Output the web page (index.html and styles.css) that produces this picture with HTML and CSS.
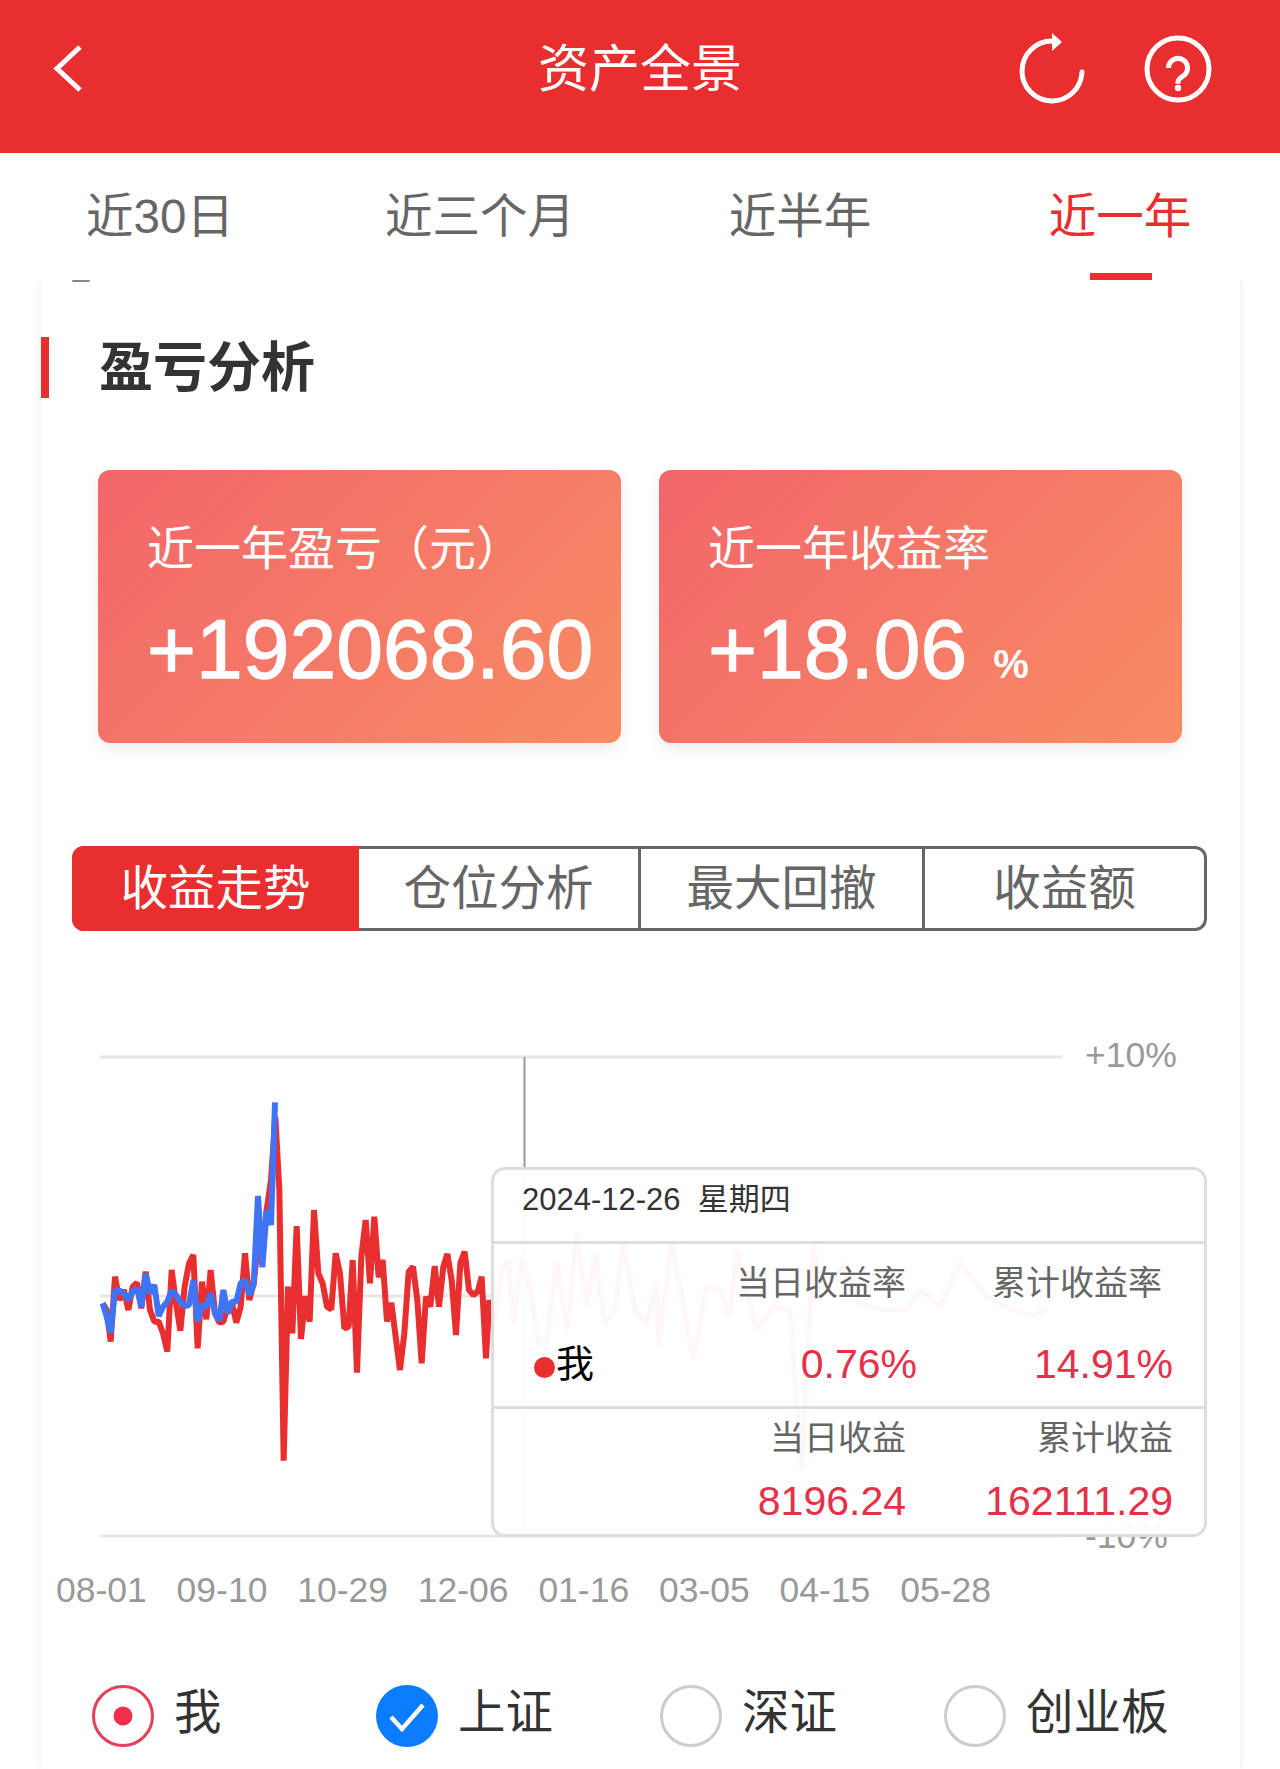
FILE: index.html
```html
<!DOCTYPE html>
<html lang="zh-CN">
<head>
<meta charset="utf-8">
<title>资产全景</title>
<link rel="stylesheet" href="styles.css">
</head>
<body>
<header class="topbar">
  <svg class="back" viewBox="50 40 40 57"><polyline points="80,47 57,68.5 80,90"/></svg>
  <h1 class="page-title">资产全景</h1>
  <div class="actions">
    <svg class="icon-refresh" viewBox="1018 28 70 80"><path d="M1082 72A30 30 0 1 1 1052 41"/><polygon points="1052,33 1062,42 1052,51"/></svg>
    <svg class="icon-help" viewBox="1140 30 76 76"><circle cx="1178" cy="69" r="31"/><path d="M1168.500 68a9.500 9.500 0 1 1 15 7.700c-3.500 2.500-5.500 3.500-5.500 6.500v1.500"/><circle class="dot" cx="1178" cy="88" r="3.200"/></svg>
  </div>
</header>
<nav class="tabs">
  <a class="tab">近30日</a>
  <a class="tab">近三个月</a>
  <a class="tab">近半年</a>
  <a class="tab active">近一年</a>
</nav>
<main class="panel">
  <div class="sliver"></div>
  <h2 class="section-title">盈亏分析</h2>
  <section class="stats">
    <div class="stat">
      <div class="stat-label">近一年盈亏（元）</div>
      <div class="stat-value">+192068.60</div>
    </div>
    <div class="stat">
      <div class="stat-label">近一年收益率</div>
      <div class="stat-value">+18.06<span class="unit">%</span></div>
    </div>
  </section>
  <div class="segments">
    <div class="segment on">收益走势</div>
    <div class="segment first">仓位分析</div>
    <div class="segment">最大回撤</div>
    <div class="segment">收益额</div>
  </div>
  <section class="chart">
    <svg class="plot" viewBox="41 1040 1199 520">
      <line class="grid" x1="100" y1="1057" x2="1062" y2="1057"/>
      <line class="grid" x1="100" y1="1296" x2="1062" y2="1296"/>
      <line class="grid" x1="100" y1="1536" x2="1062" y2="1536"/>
      <text class="y-label" x="1085" y="1067">+10%</text>
      <text class="y-label" x="1085" y="1548">-10%</text>
      <line class="cursor" x1="524.500" y1="1057" x2="524.500" y2="1535"/>
      <g transform="translate(480 1230) scale(.33333)">
        <polyline class="line-red thin" points="27,210 45,270 65,120 85,90 100,280 125,85 150,180 175,340 200,340 230,90 262,300 290,10 320,230 345,70 375,280 405,240 430,40 465,240 500,280 530,150 535,350 575,40 610,220 640,390 680,170 720,180 750,260 770,60 830,300 880,230 930,240 965,720 1000,40 1020,180 1100,100 1140,220 1200,240 1280,240 1320,180 1380,230 1440,100 1520,200 1600,240 1660,260 1700,230"/>
      </g>
      <g transform="translate(60 1040) scale(.33333)">
        <polyline class="line-red" points="128,790 140,810 152,905 165,710 178,780 192,750 205,810 218,740 231,728 244,805 257,695 270,810 283,845 296,845 309,880 322,935 335,690 348,790 361,872 374,740 387,670 400,645 413,925 426,725 439,838 452,690 465,820 478,848 490,845 503,800 516,790 529,848 542,800 555,640 568,780 581,730 594,610 607,620 620,510 633,420 646,230 658,450 671,1262 684,740 697,880 710,558 723,897 736,768 749,845 762,510 775,700 788,730 801,800 814,808 827,640 840,700 853,865 866,860 878,660 891,998 904,650 917,540 930,730 943,530 956,712 968,660 981,845 994,788 1007,890 1020,990 1033,880 1046,695 1059,680 1072,780 1085,970 1098,770 1111,800 1124,678 1137,800 1150,680 1162,642 1175,720 1188,885 1201,670 1214,635 1227,750 1240,765 1253,755 1265,710 1278,955 1288,780"/>
        <polyline class="line-blue" points="128,790 140,830 152,878 165,750 178,752 192,760 205,780 218,755 231,745 244,800 257,700 270,760 283,735 296,828 309,800 322,785 335,752 348,765 361,785 374,798 387,795 400,720 413,845 426,795 439,800 452,760 465,820 478,842 490,750 503,820 516,785 529,785 542,730 555,720 568,765 581,735 594,468 607,682 620,510 633,555 645,187"/>
      </g>
    </svg>
    <aside class="tip">
      <div class="tip-head">2024-12-26  星期四</div>
      <div class="tip-row tip-rate">
        <span></span>
        <span class="tip-cap pad">当日收益率</span>
        <span class="tip-cap pad">累计收益率</span>
        <span class="who"><i class="who-dot"></i>我</span>
        <span class="tip-val">0.76%</span>
        <span class="tip-val">14.91%</span>
      </div>
      <div class="tip-row tip-amount">
        <span></span>
        <span class="tip-cap">当日收益</span>
        <span class="tip-cap">累计收益</span>
        <span></span>
        <span class="tip-val">8196.24</span>
        <span class="tip-val">162111.29</span>
      </div>
    </aside>
  </section>
  <div class="x-axis">
    <span>08-01</span><span>09-10</span><span>10-29</span><span>12-06</span><span>01-16</span><span>03-05</span><span>04-15</span><span>05-28</span>
  </div>
  <div class="legend">
    <label class="legend-item">
      <svg class="radio" viewBox="0 0 62 62"><circle class="ring-red" cx="31" cy="31" r="29.500"/><circle class="core-red" cx="31" cy="31" r="9.500"/></svg><span class="legend-text">我</span>
    </label>
    <label class="legend-item">
      <svg class="radio" viewBox="0 0 62 62"><circle class="fill-blue" cx="31" cy="31" r="31"/><polyline class="check" points="15,32 26,44 47,20"/></svg><span class="legend-text">上证</span>
    </label>
    <label class="legend-item">
      <svg class="radio" viewBox="0 0 62 62"><circle class="ring-grey" cx="31" cy="31" r="29.500"/></svg><span class="legend-text">深证</span>
    </label>
    <label class="legend-item">
      <svg class="radio" viewBox="0 0 62 62"><circle class="ring-grey" cx="31" cy="31" r="29.500"/></svg><span class="legend-text">创业板</span>
    </label>
  </div>
</main>
</body>
</html>
```
FILE: styles.css
```css
* { box-sizing: border-box; }
html, body { margin: 0; padding: 0; }
body {
  width: 1280px;
  height: 1769px;
  overflow: hidden;
  background: #fff;
  font-family: "Liberation Sans", "Noto Sans CJK SC", sans-serif;
  color: #333;
}

/* top bar */
.topbar {
  position: relative;
  z-index: 2;
  height: 153px;
  padding: 0 64px 17px 50px;
  background: #e82e2f;
  display: flex;
  align-items: center;
  justify-content: space-between;
}
.back { width: 40px; height: 57px; fill: none; stroke: #fff; stroke-width: 5; }
.page-title {
  position: absolute;
  left: 0;
  right: 0;
  top: 40px;
  margin: 0;
  text-align: center;
  font-size: 51px;
  line-height: 60px;
  font-weight: 400;
  color: #fff;
}
.actions { display: flex; align-items: center; gap: 52px; }
.icon-refresh { width: 70px; height: 80px; fill: none; stroke: #fff; stroke-width: 5; stroke-linecap: round; }
.icon-refresh polygon { fill: #fff; stroke: none; }
.icon-help { width: 76px; height: 76px; fill: none; stroke: #fff; stroke-width: 5; }
.icon-help .dot { fill: #fff; stroke: none; }

/* tabs */
.tabs {
  position: relative;
  z-index: 2;
  height: 127px;
  background: #fff;
  display: grid;
  grid-template-columns: repeat(4, 320px);
}
.tab {
  position: relative;
  text-align: center;
  font-size: 47.500px;
  line-height: 127px;
  color: #666;
}
.tab.active { color: #e82e2f; }
.tab.active::after {
  content: "";
  position: absolute;
  left: 130px;
  bottom: 0;
  width: 62px;
  height: 7px;
  background: #e82e2f;
}

/* panel */
.panel {
  margin: 0 40px 0 41px;
  height: 1489px;
  background: #fff;
  box-shadow: 0 0 8px rgba(0, 0, 0, .09);
}
.sliver { width: 18px; height: 2px; margin-left: 31px; background: #888; border-radius: 1px; }
.section-title {
  margin: 55px 0 0;
  height: 61px;
  padding-left: 50px;
  border-left: 8px solid #e82e2f;
  font-size: 54px;
  line-height: 62px;
  font-weight: 700;
  color: #333;
}

/* stat cards */
.stats {
  margin: 72px 0 0 57px;
  display: flex;
  gap: 38px;
}
.stat {
  width: 523px;
  height: 273px;
  padding: 47px 0 0 49px;
  border-radius: 12px;
  background: linear-gradient(135deg, #f2666a, #f88c64);
  box-shadow: 0 6px 16px rgba(0, 0, 0, .08);
  color: #fff;
}
.stat-label { font-size: 47px; line-height: 64px; }
.stat-value {
  margin-top: 22px;
  font-size: 84px;
  line-height: 92px;
  font-weight: 400;
  -webkit-text-stroke: 1.300px #fff;
  white-space: nowrap;
}
.unit { margin-left: 26px; font-size: 40px; font-weight: 700; -webkit-text-stroke: 0; }

/* segmented control */
.segments {
  margin: 103px 0 0 31px;
  width: 1135px;
  height: 85px;
  border: 3px solid #666;
  border-radius: 12px;
  display: grid;
  grid-template-columns: 284px 279px 284px 1fr;
}
.segment {
  font-size: 47.500px;
  line-height: 79px;
  text-align: center;
  color: #666;
  border-left: 3px solid #666;
}
.segment.first { border-left: 0; }
.segment.on {
  margin: -3px 0 -3px -3px;
  width: 287px;
  line-height: 85px;
  border-left: 0;
  border-radius: 12px 0 0 12px;
  background: #e82e2f;
  color: #fff;
}

/* chart */
.chart { position: relative; margin-top: 109px; height: 520px; }
.plot { display: block; width: 1199px; height: 520px; }
.grid { stroke: #e6e6e6; stroke-width: 3; }
.cursor { stroke: #999; stroke-width: 2; }
.y-label { font-size: 35.500px; fill: #999; }
.line-red, .line-blue { fill: none; stroke-width: 18; stroke-linejoin: bevel; }
.line-red { stroke: #e82e2f; }
.line-red.thin { stroke-width: 15; }
.line-blue { stroke: #3f74f6; }

.tip {
  position: absolute;
  left: 450px;
  top: 127px;
  width: 716px;
  height: 370px;
  border: 3px solid #ddd;
  border-radius: 14px;
  background: rgba(255, 255, 255, .96);
}
.tip-head {
  height: 74px;
  padding-left: 28px;
  border-bottom: 3px solid #ddd;
  font-size: 31px;
  line-height: 60px;
  color: #333;
  white-space: pre;
}
.tip-row {
  display: grid;
  padding-right: 31px;
  text-align: right;
}
.tip-rate {
  height: 165px;
  padding-top: 19px;
  grid-template-columns: 223px 200px 256px;
  grid-template-rows: 40px 44px;
  row-gap: 39px;
  border-bottom: 3px solid #ddd;
}
.tip-amount {
  padding-top: 9px;
  grid-template-columns: 212px 200px 267px;
  grid-template-rows: 40px 44px;
  row-gap: 21px;
}
.tip-cap { font-size: 34px; line-height: 40px; color: #666; white-space: nowrap; }
.tip-cap.pad { padding-right: 11px; }
.tip-val { font-size: 41px; line-height: 44px; color: #e5304a; white-space: nowrap; }
.who { display: flex; align-items: center; padding-left: 40px; font-size: 38px; line-height: 44px; color: #000; }
.who-dot { width: 21px; height: 21px; margin-top: 7px; margin-right: 1px; border-radius: 50%; background: #e82e2f; }

/* x axis */
.x-axis {
  height: 60px;
  padding-left: 15px;
  display: grid;
  grid-template-columns: repeat(8, 120.600px);
  font-size: 35.500px;
  line-height: 60px;
  color: #999;
}

/* legend */
.legend {
  margin-top: 65px;
  padding-left: 51px;
  display: grid;
  grid-template-columns: repeat(4, 284px);
}
.legend-item { display: flex; align-items: center; gap: 20px; height: 62px; font-size: 47.500px; line-height: 48px; color: #333; }
.legend-text { margin-top: -7px; }
.radio { width: 62px; height: 62px; flex: none; }
.ring-red { fill: none; stroke: #e5405a; stroke-width: 3; }
.core-red { fill: #ef2f4b; }
.ring-grey { fill: none; stroke: #ccc; stroke-width: 3; }
.fill-blue { fill: #0a7cff; }
.check { fill: none; stroke: #fff; stroke-width: 4.500; }
```
